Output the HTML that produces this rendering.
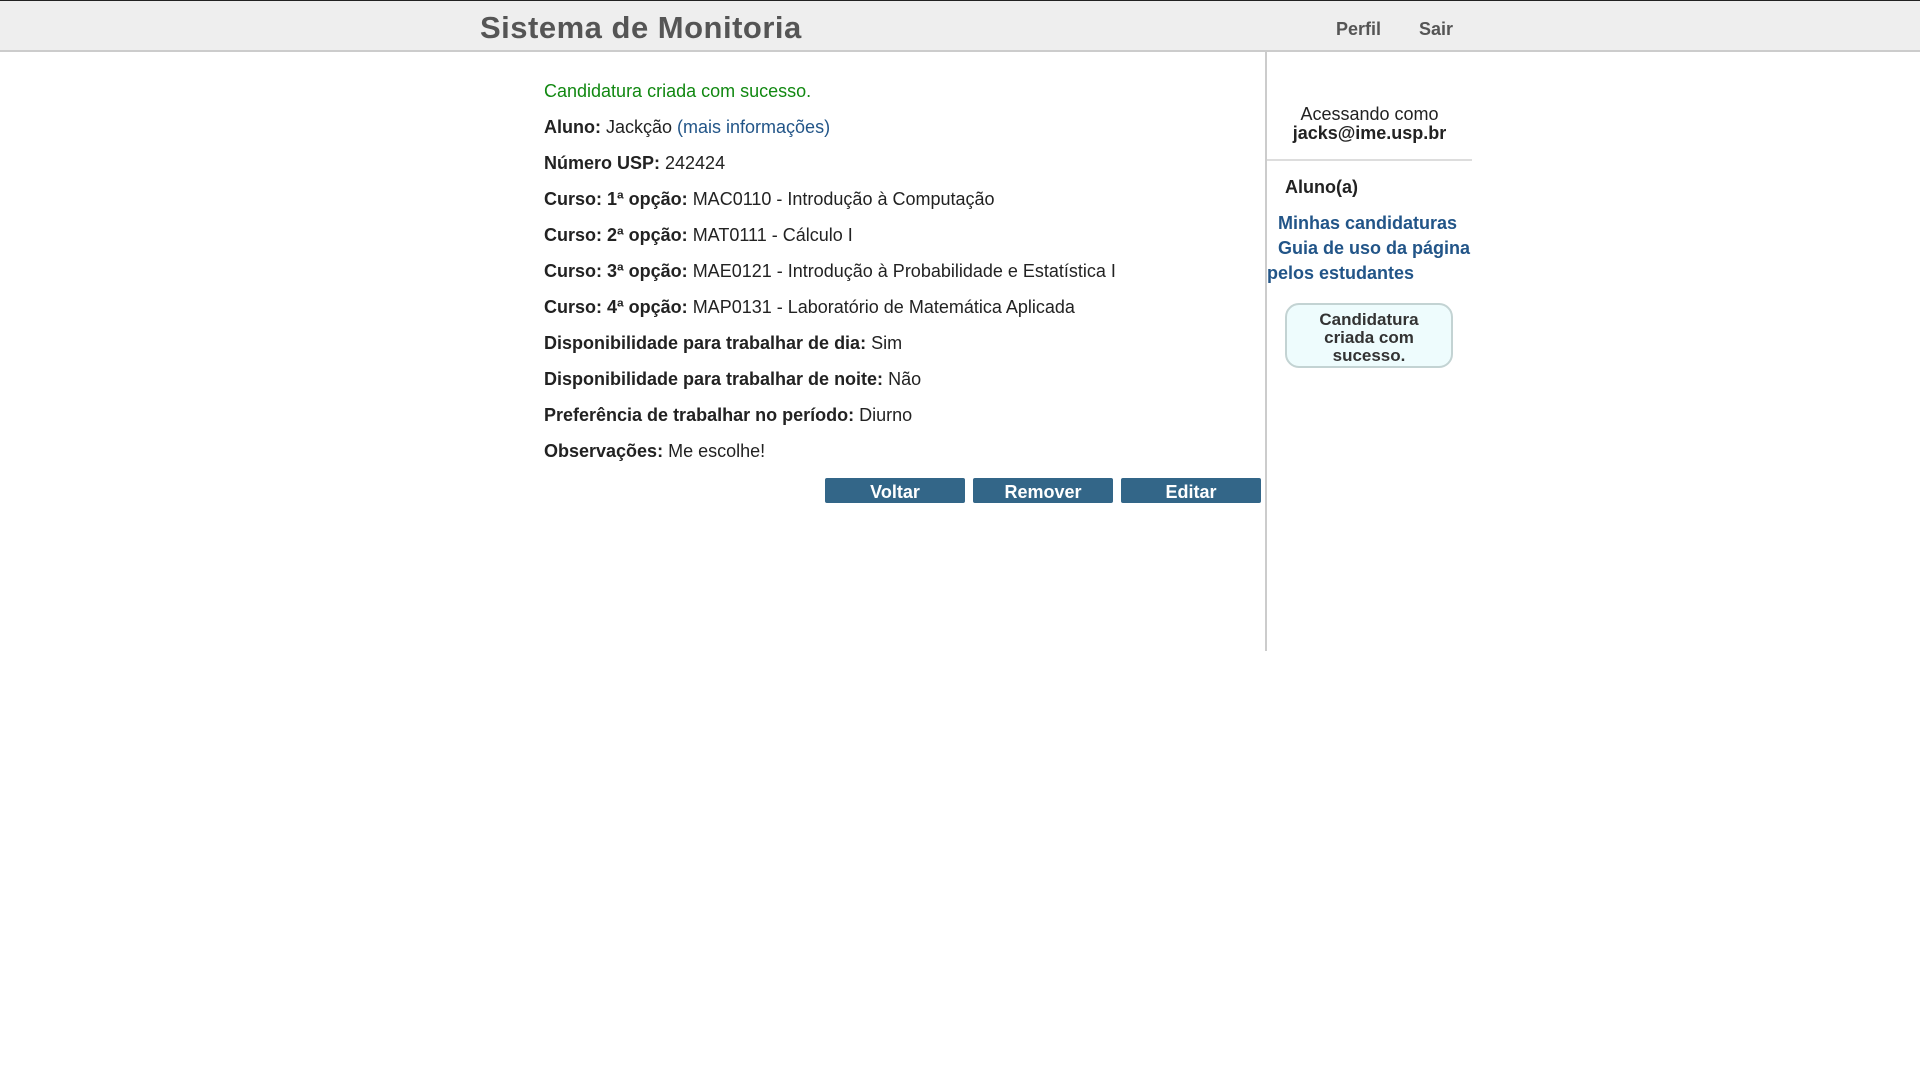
<!DOCTYPE html>
<html><head><meta charset="utf-8"><style>
*{box-sizing:border-box}
body{margin:0;width:1920px;height:1080px;background:#fff;font-family:"Liberation Sans",Arial,sans-serif;color:#222;position:relative;overflow:hidden}
.hdr{position:absolute;left:0;top:0;width:1920px;height:52px;background:#eee;border-top:1px solid #222;border-bottom:2px solid #ccc}
.title{position:absolute;left:480px;top:9px;font-size:31px;color:#555;font-weight:bold;letter-spacing:0.5px}
.nav{position:absolute;top:18px;font-size:18px;font-weight:bold;color:#555}
.main{position:absolute;left:544px;top:81px;font-size:18px}
.main p{margin:0 0 16px 0;line-height:20px;white-space:nowrap}
.g{color:#118811}
.lk{color:#225588}
.side{position:absolute;left:1265px;top:52px;width:2px;height:599px;background:#ccc}
.btn{position:absolute;top:478px;width:140px;height:25px;background:#336688;color:#fff;font-weight:bold;font-size:18px;text-align:center;line-height:28px;border-radius:2px}
.sb{position:absolute;font-size:18px}
</style></head><body>
<div class="hdr"><div class="title">Sistema de Monitoria</div>
<div class="nav" style="left:1336px">Perfil</div><div class="nav" style="left:1419px">Sair</div></div>
<div class="main">
<p class="g">Candidatura criada com sucesso.</p>
<p><b>Aluno:</b> Jackção <span class="lk">(mais informações)</span></p>
<p><b>Número USP:</b> 242424</p>
<p><b>Curso: 1ª opção:</b> MAC0110 - Introdução à Computação</p>
<p><b>Curso: 2ª opção:</b> MAT0111 - Cálculo I</p>
<p><b>Curso: 3ª opção:</b> MAE0121 - Introdução à Probabilidade e Estatística I</p>
<p><b>Curso: 4ª opção:</b> MAP0131 - Laboratório de Matemática Aplicada</p>
<p><b>Disponibilidade para trabalhar de dia:</b> Sim</p>
<p><b>Disponibilidade para trabalhar de noite:</b> Não</p>
<p><b>Preferência de trabalhar no período:</b> Diurno</p>
<p><b>Observações:</b> Me escolhe!</p>
</div>
<div class="btn" style="left:825px">Voltar</div>
<div class="btn" style="left:973px">Remover</div>
<div class="btn" style="left:1121px">Editar</div>
<div class="side"></div>
<div class="sb" style="left:1267px;width:205px;top:105px;text-align:center;line-height:19px">Acessando como<br><b>jacks@ime.usp.br</b></div>
<div style="position:absolute;left:1267px;top:159px;width:205px;height:2px;background:#ddd"></div>
<div class="sb" style="left:1285px;top:177px;font-weight:bold;line-height:20px">Aluno(a)</div>
<div class="sb lk" style="left:1278px;top:211px;font-weight:bold;line-height:25px;white-space:nowrap">Minhas candidaturas</div>
<div class="sb lk" style="left:1278px;top:236px;font-weight:bold;line-height:25px;white-space:nowrap">Guia de uso da página</div>
<div class="sb lk" style="left:1267px;top:261px;font-weight:bold;line-height:25px;white-space:nowrap">pelos estudantes</div>
<div style="position:absolute;left:1285px;top:303px;width:168px;height:65px;background:#eefcfd;border:2px solid #c3d3d3;border-radius:14px;text-align:center;font-weight:bold;font-size:17px;line-height:18px;padding-top:6px;color:#333">Candidatura<br>criada com<br>sucesso.</div>
</body></html>
